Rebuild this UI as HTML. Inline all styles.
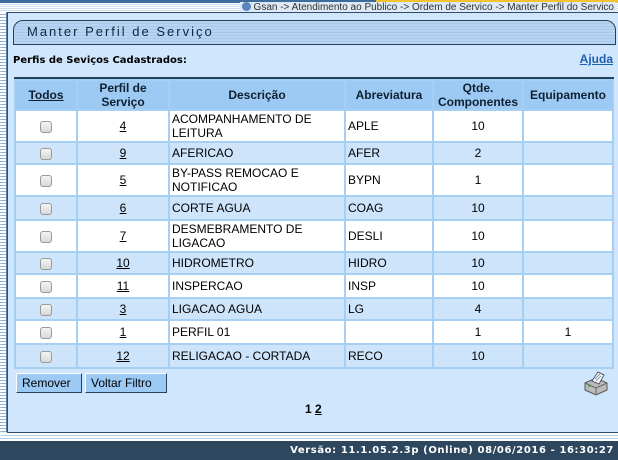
<!DOCTYPE html>
<html><head><meta charset="utf-8"><style>
*{margin:0;padding:0;box-sizing:border-box}
body{width:618px;height:460px;overflow:hidden;background:#e8f1fa;font-family:"Liberation Sans",Arial,sans-serif;position:relative;font-size:12px;color:#000}
.top{position:absolute;left:0;top:0;width:618px;height:3px;background:#3d6b9a}
.stripes{position:absolute;left:0;top:3px;width:618px;height:9px;background:repeating-linear-gradient(#fff 0 1px,#cfe0f0 1px 2px)}
.gold{position:absolute;left:376px;top:0;width:242px;height:3px;background:#f2c230}
.crumb{position:absolute;right:2px;top:2px;font-size:10px;color:#333;background:#dde9f4;padding:0 2px}
.crumb b{display:inline-block;width:9px;height:9px;border-radius:50%;background:#5a86c0;vertical-align:-1px;margin-right:3px}
.left{position:absolute;left:0;top:12px;width:7px;height:420px;background:repeating-linear-gradient(#fff 0 2px,#8fb2d6 2px 3px);border-right:1px solid #5a7ea4}
.panel{position:absolute;left:7px;top:12px;width:611px;height:421px;background:#cfe6fc;border:1px solid #2f4d6c;border-right:none}
.title{position:absolute;left:13px;top:20px;width:603px;height:25px;border:1px solid #23405c;border-radius:10px 10px 0 0;background:repeating-linear-gradient(#b6d4f2 0 2px,#a8c9ec 2px 3px);font-size:13px;letter-spacing:2px;color:#12263a;padding:3px 0 0 13px}
.lbl{position:absolute;left:13px;top:55px;font-size:10px;font-weight:bold;font-family:"DejaVu Sans",sans-serif}
.ajuda{position:absolute;right:5px;top:52px;font-size:12px;font-weight:bold;color:#2060b0;text-decoration:underline}
.tline{position:absolute;left:14px;top:77px;width:600px;height:2px;background:#23405c}
table{position:absolute;left:14px;top:79px;border-collapse:separate;border-spacing:2px;width:600px;table-layout:fixed;background:#a6cff4}
td,th{font-size:12px;text-align:center;vertical-align:middle;line-height:14px}
th{background:#9ccaf5;font-weight:bold;height:27px;color:#102030}
th.u{text-decoration:underline}
tr.w td{background:#fff}
tr.b td{background:#cde4fb}
td.d{text-align:left;padding-left:2px}
td a{color:#000;text-decoration:underline}
.cb{display:inline-block;width:12px;height:12px;border:1px solid #999;border-radius:3px;background:linear-gradient(#f4f4f4,#d8d8d8);vertical-align:middle}
.btn{position:absolute;top:373px;height:20px;background:#9ccaf5;border:1px solid #2a4a6a;border-color:#fff #23405c #23405c #fff;font-size:12px;padding:2px 5px 0;color:#000}
.pg{position:absolute;left:305px;top:402px;font-size:12px;font-weight:bold}
.lines{position:absolute;left:0;top:433px;width:618px;height:8px;background:repeating-linear-gradient(#fff 0 2px,#b8d0e6 2px 3px)}
.foot{position:absolute;left:0;top:441px;width:618px;height:19px;background:#2d475e;color:#fff;font-size:10px;font-weight:bold;font-family:"DejaVu Sans",sans-serif;text-align:right;padding:4px 4px 0 0;letter-spacing:0.6px}
</style></head><body>
<div class="top"></div><div class="gold"></div><div class="stripes"></div>
<div class="crumb"><b></b>Gsan -&gt; Atendimento ao Publico -&gt; Ordem de Servico -&gt; Manter Perfil do Servico</div>
<div class="left"></div>
<div class="panel"></div>
<div class="title">Manter Perfil de Serviço</div>
<div class="lbl">Perfis de Seviços Cadastrados:</div>
<div class="ajuda">Ajuda</div>
<div class="tline"></div>
<table>
<colgroup><col style="width:60px"><col style="width:90px"><col style="width:174px"><col style="width:86px"><col style="width:88px"><col style="width:88px"></colgroup>
<tr><th class="u">Todos</th><th>Perfil de<br>Serviço</th><th>Descrição</th><th>Abreviatura</th><th>Qtde.<br>Componentes</th><th>Equipamento</th></tr>
<tr class="w" style="height:30px"><td><span class="cb"></span></td><td><a>4</a></td><td class="d">ACOMPANHAMENTO DE LEITURA</td><td class="d">APLE</td><td>10</td><td></td></tr>
<tr class="b" style="height:20px"><td><span class="cb"></span></td><td><a>9</a></td><td class="d">AFERICAO</td><td class="d">AFER</td><td>2</td><td></td></tr>
<tr class="w" style="height:30px"><td><span class="cb"></span></td><td><a>5</a></td><td class="d">BY-PASS REMOCAO E NOTIFICAO</td><td class="d">BYPN</td><td>1</td><td></td></tr>
<tr class="b" style="height:22px"><td><span class="cb"></span></td><td><a>6</a></td><td class="d">CORTE AGUA</td><td class="d">COAG</td><td>10</td><td></td></tr>
<tr class="w" style="height:30px"><td><span class="cb"></span></td><td><a>7</a></td><td class="d">DESMEBRAMENTO DE LIGACAO</td><td class="d">DESLI</td><td>10</td><td></td></tr>
<tr class="b" style="height:20px"><td><span class="cb"></span></td><td><a>10</a></td><td class="d">HIDROMETRO</td><td class="d">HIDRO</td><td>10</td><td></td></tr>
<tr class="w" style="height:22px"><td><span class="cb"></span></td><td><a>11</a></td><td class="d">INSPERCAO</td><td class="d">INSP</td><td>10</td><td></td></tr>
<tr class="b" style="height:20px"><td><span class="cb"></span></td><td><a>3</a></td><td class="d">LIGACAO AGUA</td><td class="d">LG</td><td>4</td><td></td></tr>
<tr class="w" style="height:22px"><td><span class="cb"></span></td><td><a>1</a></td><td class="d">PERFIL 01</td><td class="d"></td><td>1</td><td>1</td></tr>
<tr class="b" style="height:22px"><td><span class="cb"></span></td><td><a>12</a></td><td class="d">RELIGACAO - CORTADA</td><td class="d">RECO</td><td>10</td><td></td></tr>
</table>
<div class="btn" style="left:16px;width:66px">Remover</div>
<div class="btn" style="left:85px;width:82px">Voltar Filtro</div>
<svg style="position:absolute;left:582px;top:369px" width="28" height="28" viewBox="0 0 28 28">
<path d="M3 14 L14 9 L25 14 L25 21 L14 26 L3 21 Z" fill="#bbb" stroke="#555" stroke-width="1"/>
<path d="M3 14 L14 19 L25 14" fill="none" stroke="#666"/>
<path d="M14 19 L14 26" stroke="#666"/>
<path d="M10 12 L16 3 L22 6 L17 15 Z" fill="#fff" stroke="#557"/>
<path d="M13 10 L18 5 M14 12 L19 7" stroke="#79a" stroke-width="1"/>
<circle cx="7" cy="17" r="1" fill="#2a2"/>
</svg>
<div class="pg">1 <span style="text-decoration:underline">2</span></div>
<div class="lines"></div>
<div class="foot">Versão: 11.1.05.2.3p (Online) 08/06/2016 - 16:30:27</div>
</body></html>
